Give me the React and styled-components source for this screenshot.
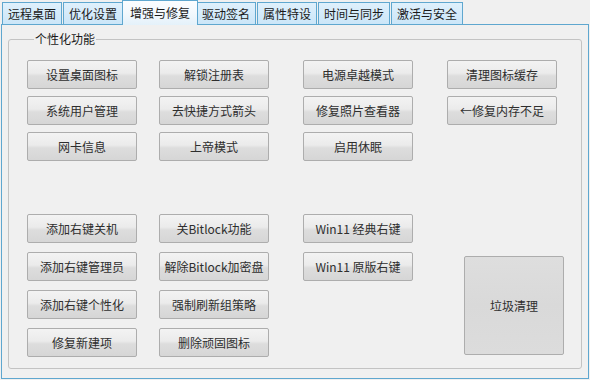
import React from "react";
import styled, { createGlobalStyle } from "styled-components";

const Global = createGlobalStyle`
  html, body { margin: 0; padding: 0; background: #f0f0f0; }
  body { font-family: "Noto Sans CJK SC", "Microsoft YaHei", sans-serif; }
  * { box-sizing: border-box; }
`;

const Window = styled.div`
  width: 590px;
  height: 380px;
  background: #f0f0f0;
  padding: 0 2px 1px 1px;
  display: flex;
  flex-direction: column;
  font-size: 12px;
  color: #1e1e1e;
`;

const TabStrip = styled.div`
  display: flex;
  align-items: flex-end;
  height: 25px;
  padding-left: 1px;
  margin-bottom: -1px;
  position: relative;
  z-index: 2;
`;

const Tab = styled.div`
  height: ${(p) => (p.$active ? "25px" : "23px")};
  line-height: ${(p) => (p.$active ? "23px" : "21px")};
  padding: 0 ${(p) => (p.$active ? "7px" : "5px")};
  margin: 0 ${(p) => (p.$active ? "-2px" : "0")};
  margin-right: ${(p) => (p.$active ? "-2px" : "1px")};
  border: 1px solid #5fa7cf;
  border-bottom: ${(p) => (p.$active ? "none" : "1px solid #5fa7cf")};
  background: ${(p) =>
    p.$active
      ? "linear-gradient(#fbfdff, #f4f9fd 45%, #e4f1fa)"
      : "linear-gradient(#dff0fc, #cbe6f8)"};
  white-space: nowrap;
  font-size: 12px;
  color: #1a1a1a;
  position: relative;
  z-index: ${(p) => (p.$active ? 3 : 1)};
`;

const Panel = styled.div`
  flex: 1;
  width: 588px;
  border: 1px solid #5fa7cf;
  background: #f0f0f0;
  padding: 7px 6px 9px 6px;
  display: flex;
  flex-direction: column;
`;

const GroupBox = styled.fieldset`
  flex: 1;
  margin: 0;
  border: 1px solid #c3c3c3;
  border-radius: 3px;
  padding: 14px 0 0 18px;
  min-width: 0;
`;

const GroupTitle = styled.legend`
  margin-left: 7px;
  padding: 0 1px;
  font-size: 12px;
  line-height: 14px;
  color: #1a1a1a;
`;

const Section = styled.div`
  display: grid;
  grid-template-columns: 132px 144px 144px 1fr;
  grid-auto-rows: 29px;
  row-gap: ${(p) => p.$gap}px;
  margin-top: ${(p) => p.$top || 0}px;
`;

const Button = styled.button`
  width: 110px;
  height: 29px;
  padding: 0;
  justify-self: start;
  border: 1px solid #adadad;
  border-radius: 2px;
  background: linear-gradient(#f3f3f3, #ebebeb 45%, #dddddd 55%, #d6d6d6);
  font-family: "Noto Sans CJK SC", "Microsoft YaHei", sans-serif;
  font-size: 12px;
  color: #2e2e2e;
  white-space: nowrap;
  grid-column: ${(p) => p.$col};
  grid-row: ${(p) => p.$row};
`;

const BigButton = styled(Button)`
  width: 100px;
  height: 99px;
  margin-left: 17px;
  align-self: end;
  margin-bottom: 2px;
  background: linear-gradient(#dedede, #d9d9d9 50%, #dcdcdc);
`;

const tabs = ["远程桌面", "优化设置", "增强与修复", "驱动签名", "属性特设", "时间与同步", "激活与安全"];

const top = [
  ["设置桌面图标", 1, 1],
  ["系统用户管理", 1, 2],
  ["网卡信息", 1, 3],
  ["解锁注册表", 2, 1],
  ["去快捷方式箭头", 2, 2],
  ["上帝模式", 2, 3],
  ["电源卓越模式", 3, 1],
  ["修复照片查看器", 3, 2],
  ["启用休眠", 3, 3],
  ["清理图标缓存", 4, 1],
  ["←修复内存不足", 4, 2],
];

const bottom = [
  ["添加右键关机", 1, 1],
  ["添加右键管理员", 1, 2],
  ["添加右键个性化", 1, 3],
  ["修复新建项", 1, 4],
  ["关Bitlock功能", 2, 1],
  ["解除Bitlock加密盘", 2, 2],
  ["强制刷新组策略", 2, 3],
  ["删除顽固图标", 2, 4],
  ["Win11 经典右键", 3, 1],
  ["Win11 原版右键", 3, 2],
];

export default function App() {
  return (
    <>
      <Global />
      <Window>
        <TabStrip>
          {tabs.map((t, i) => (
            <Tab key={t} $active={i === 2}>
              {t}
            </Tab>
          ))}
        </TabStrip>
        <Panel>
          <GroupBox>
            <GroupTitle>个性化功能</GroupTitle>
            <Section $gap={7}>
              {top.map(([label, c, r]) => (
                <Button key={label} $col={c} $row={r}>
                  {label}
                </Button>
              ))}
            </Section>
            <Section $gap={9} $top={53}>
              {bottom.map(([label, c, r]) => (
                <Button key={label} $col={c} $row={r}>
                  {label}
                </Button>
              ))}
              <BigButton $col={4} $row="2 / span 3">垃圾清理</BigButton>
            </Section>
          </GroupBox>
        </Panel>
      </Window>
    </>
  );
}
